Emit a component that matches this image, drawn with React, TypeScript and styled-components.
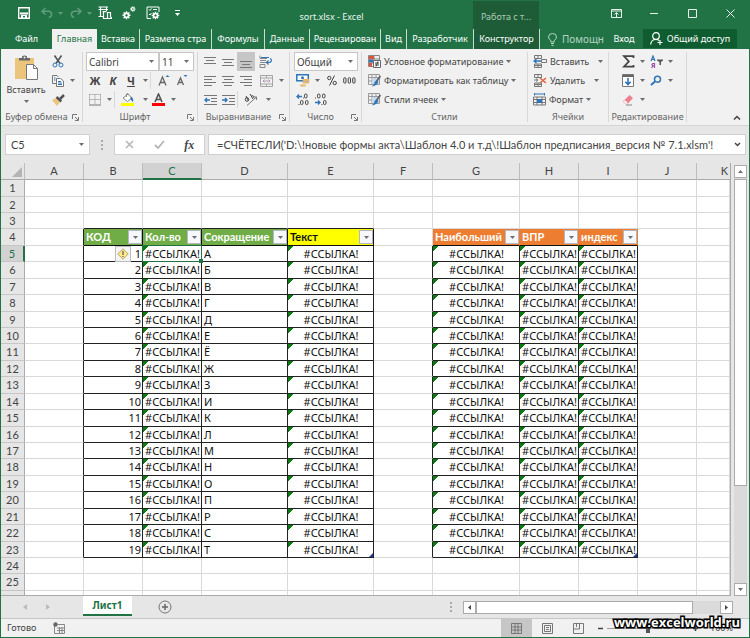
import React from "react";
import styled, { createGlobalStyle, css } from "styled-components";

const ui = `"Noto Sans", "Open Sans", sans-serif`;
const sheetFont = `Lato, "Noto Sans", sans-serif`;
const green = "#217346";
const ink = "#444444";
const blue = "#2e75b6";

const Global = createGlobalStyle`
  * { box-sizing: border-box; }
  body { margin: 0; background: #fff; }
  button, select, input { font: inherit; color: inherit; margin: 0; padding: 0; border: 0; background: none; }
  svg { display: block; flex: none; }
`;

const Window = styled.div`
  display: flex;
  flex-direction: column;
  height: 100vh;
  overflow: hidden;
  border: 1px solid ${green};
  border-top: 0;
  background: #e6e6e6;
  font: 9px/14px ${ui};
  color: ${ink};
`;

/* ---------- Title bar ---------- */
const TitleBar = styled.header`
  display: grid;
  grid-template-columns: 189px 1fr 66px 210px;
  height: 29px;
  flex: none;
  background: ${green};
  color: #e9f3ed;
`;
const QuickAccess = styled.div`
  display: flex;
  align-items: center;
  padding: 0 0 3px 11px;
`;
const QuickButton = styled.button<{ $w: number; $dim?: boolean }>`
  display: flex;
  align-items: center;
  justify-content: center;
  gap: 5px;
  width: ${(p) => p.$w}px;
  height: 24px;
  color: ${(p) => (p.$dim ? "#5f9c7c" : "#fff")};
`;
const DocTitle = styled.h1`
  margin: 0;
  padding-top: 4px;
  font: 9px/25px ${ui};
  text-align: center;
`;
const ContextTitle = styled.div`
  background: #1e5c38;
  color: #a9c9b6;
  line-height: 25px;
  padding-top: 3px;
  margin-top: 1px;
  text-align: center;
  white-space: nowrap;
`;
const WindowControls = styled.div`
  display: flex;
  justify-content: flex-end;
`;
const WindowButton = styled.button`
  display: flex;
  align-items: center;
  justify-content: center;
  width: 38px;
  height: 27px;
`;

/* ---------- Tabs ---------- */
const TabBar = styled.nav`
  display: flex;
  flex: none;
  height: 20px;
  background: ${green};
  color: #fff;
`;
const Tab = styled.button<{ $w: number; $active?: boolean; $context?: boolean; $sep?: boolean }>`
  width: ${(p) => p.$w}px;
  height: 20px;
  overflow: hidden;
  white-space: nowrap;
  text-align: center;
  flex: none;
  ${(p) => p.$sep && css`border-right: 1px solid #c5dccf;`}
  ${(p) => p.$active && css`background: #f1f1f1; color: ${green};`}
  ${(p) => p.$context && css`background: #1e5c38;`}
`;
const TellMe = styled.label`
  display: flex;
  align-items: center;
  gap: 5px;
  width: 69px;
  padding-left: 8px;
  color: #b4d3c1;
  input { width: 44px; min-width: 0; height: 18px; font-size: 10px; }
  input::placeholder { color: #b4d3c1; opacity: 1; }
`;
const Share = styled.button`
  display: flex;
  align-items: center;
  justify-content: center;
  gap: 4px;
  width: 94px;
  height: 19px;
  margin: 0 12px 0 auto;
  background: #0e5c2f;
  white-space: nowrap;
`;

/* ---------- Ribbon ---------- */
const Ribbon = styled.div`
  display: flex;
  flex: none;
  height: 77px;
  padding-top: 3px;
  background: #f1f1f1;
  border-bottom: 1px solid #d5d5d5;
`;
const Group = styled.section<{ $w: number }>`
  display: grid;
  grid-template-rows: 57px 16px;
  flex: none;
  width: ${(p) => p.$w}px;
  height: 70px;
  border-right: 1px solid #d8d8d8;
`;
const GroupBody = styled.div`
  display: flex;
`;
const GroupFooter = styled.div`
  display: flex;
  align-items: center;
  color: #666;
  white-space: nowrap;
  span { flex: 1; text-align: center; }
  button { padding-right: 3px; }
`;
const Rows = styled.div<{ $pad?: number }>`
  display: grid;
  grid-template-rows: repeat(3, 19px);
  padding-left: ${(p) => p.$pad ?? 0}px;
`;
const Row = styled.div`
  display: flex;
  align-items: center;
`;
const Tool = styled.button<{ $w?: number; $on?: boolean }>`
  display: flex;
  align-items: center;
  justify-content: center;
  width: ${(p) => p.$w ?? 18}px;
  height: 19px;
  flex: none;
  ${(p) => p.$on && css`background: #c6c6c6;`}
`;
const Glyph = styled.span<{ $italic?: boolean; $underline?: boolean }>`
  font-weight: 700;
  font-size: 11px;
  font-style: ${(p) => (p.$italic ? "italic" : "normal")};
  text-decoration: ${(p) => (p.$underline ? "underline" : "none")};
`;
const Rule = styled.i`
  width: 1px;
  height: 17px;
  background: #d8d8d8;
  flex: none;
`;
const Paste = styled.button`
  display: flex;
  flex-direction: column;
  align-items: center;
  width: 50px;
  padding-top: 3px;
`;
const PasteLabel = styled.span`
  line-height: 17px;
  padding: 1px 0 2px;
`;
const TextTool = styled.button<{ $gap?: number }>`
  display: flex;
  align-items: center;
  height: 19px;
  gap: 3px;
  white-space: nowrap;
  svg:last-child { margin-left: ${(p) => p.$gap ?? 0}px; }
`;
const PickWrap = styled.label<{ $w: number }>`
  position: relative;
  width: ${(p) => p.$w}px;
  height: 19px;
  background: #fff;
  border: 1px solid #c6c6c6;
  select {
    appearance: none;
    display: block;
    width: 100%;
    height: 17px;
    padding-left: 2px;
    font-size: 10px;
  }
  svg { position: absolute; right: 4px; top: 7px; pointer-events: none; }
`;
const Collapse = styled.button`
  display: flex;
  align-items: flex-end;
  margin-left: auto;
  padding: 0 8px 5px 0;
`;

/* ---------- Formula bar ---------- */
const FormulaBar = styled.div`
  display: flex;
  align-items: center;
  flex: none;
  height: 37px;
  padding: 0 3px 0 4px;
  font: 11px/18px ${sheetFont};
`;
const NameBox = styled.label`
  display: flex;
  align-items: center;
  width: 85px;
  height: 21px;
  padding: 0 5px;
  background: #fff;
  border: 1px solid #d0d0d0;
  input { flex: 1; min-width: 0; }
`;
const Dots = styled.span`
  display: flex;
  justify-content: center;
  width: 24px;
`;
const EntryButtons = styled.div`
  display: flex;
  width: 91px;
  height: 21px;
  background: #fff;
  border: 1px solid #d0d0d0;
  button { flex: 1; display: flex; align-items: center; justify-content: center; }
`;
const FxButton = styled.button`
  font: italic 700 12px/18px "Liberation Serif", serif;
`;
const FormulaField = styled.div`
  display: flex;
  align-items: center;
  flex: 1;
  height: 21px;
  margin-left: 3px;
  padding: 0 4px 0 8px;
  background: #fff;
  border: 1px solid #d0d0d0;
  input { flex: 1; min-width: 0; }
`;

/* ---------- Sheet ---------- */
const SheetArea = styled.main`
  display: flex;
  flex: 1;
  min-height: 0;
`;
const GridClip = styled.div`
  flex: 1;
  min-width: 0;
  overflow: hidden;
  border-right: 1px solid #ababab;
  border-bottom: 1px solid #ababab;
`;
const Grid = styled.table`
  width: 100%;
  table-layout: fixed;
  border-collapse: separate;
  border-spacing: 0;
  background: #fff;
  font: 11px/14px ${sheetFont};
  color: #111;
  th, td { padding: 0; white-space: nowrap; overflow: hidden; }
`;
const Col = styled.col<{ $w?: number }>`
  width: ${(p) => (p.$w ? `${p.$w}px` : "auto")};
`;
const ColHead = styled.th<{ $active?: boolean; $last?: boolean }>`
  height: 17px;
  font-weight: 400;
  color: ${(p) => (p.$active ? green : ink)};
  background: ${(p) => (p.$active ? "#d2d2d2" : "#e6e6e6")};
  border-right: 1px solid #bcbcbc;
  border-bottom: ${(p) => (p.$active ? `2px solid ${green}` : "1px solid #ababab")};
  ${(p) => p.$last && css`&& { text-align: right; padding-right: 2px; border-right: 0; }`}
`;
const Corner = styled.th`
  background: #e6e6e6;
  border-right: 1px solid #bcbcbc;
  border-bottom: 1px solid #ababab;
  svg { margin: 2px 2px 0 auto; }
`;
const SheetRow = styled.tr<{ $h: number }>`
  height: ${(p) => p.$h}px;
`;
const RowHead = styled.th<{ $active?: boolean }>`
  font-weight: 400;
  color: ${(p) => (p.$active ? green : ink)};
  background: ${(p) => (p.$active ? "#d2d2d2" : "#e6e6e6")};
  border-bottom: 1px solid #c6c6c6;
  border-right: ${(p) => (p.$active ? `2px solid ${green}` : "1px solid #ababab")};
`;
const Cell = styled.td<{ $right?: string; $bottom?: string; $align?: string; $flag?: boolean }>`
  font-family: ${ui};
  text-align: ${(p) => p.$align ?? "left"};
  border-right: 1px solid ${(p) => p.$right ?? "#d9d9d9"};
  border-bottom: 1px solid ${(p) => p.$bottom ?? "#d9d9d9"};
  ${(p) => p.$flag && css`background: linear-gradient(135deg, #087c10 4px, transparent 4px);`}
  && { overflow: visible; padding: 0 1px 0 2px; position: relative; }
`;
const TableHead = styled.th<{ $bg: string; $fg: string; $right: string }>`
  background: ${(p) => p.$bg};
  color: ${(p) => p.$fg};
  border-right: 1px solid ${(p) => p.$right};
  border-bottom: 1px solid #111;
  font-weight: 700;
`;
const HeadInner = styled.div`
  display: flex;
  align-items: center;
  justify-content: space-between;
  padding-left: 2px;
  height: 15px;
`;
const FilterButton = styled.button`
  display: flex;
  align-items: center;
  justify-content: center;
  width: 14px;
  height: 14px;
  flex: none;
  background: #f7f8fb;
  border: 1px solid #b4b8c4;
`;
const Selection = styled.i`
  position: absolute;
  inset: -1px;
  border: 1px solid ${green};
  outline: 1px solid ${green};
  outline-offset: -1px;
  z-index: 1;
  &::after {
    content: "";
    position: absolute;
    right: -2px;
    bottom: -2px;
    width: 4px;
    height: 4px;
    background: ${green};
  }
`;
const Warning = styled.button`
  position: absolute;
  right: 11px;
  top: 0;
  width: 16px;
  height: 16px;
  display: flex;
  align-items: center;
  justify-content: center;
  background: #f4f4f4;
  border: 1px solid #bdbdbd;
`;
const Resize = styled.i`
  position: absolute;
  right: 0;
  bottom: 0;
  border: 2px solid #1f3b94;
  border-left-color: transparent;
  border-top-color: transparent;
`;
const VScroll = styled.div`
  display: flex;
  flex-direction: column;
  width: 13px;
  margin: 2px 2px 0 3px;
  flex: none;
  background: #dadada;
`;
const ScrollButton = styled.button`
  display: flex;
  align-items: center;
  justify-content: center;
  width: 13px;
  height: 13px;
  flex: none;
  background: #fff;
  border: 1px solid #ababab;
`;
const VTrack = styled.div`
  flex: 1;
  padding-top: 1px;
`;
const VThumb = styled.div`
  height: 76%;
  background: #fff;
  border: 1px solid #ababab;
`;

/* ---------- Sheet tabs ---------- */
const SheetTabs = styled.div`
  display: flex;
  flex: none;
  height: 23px;
  border-bottom: 1px solid #c6c6c6;
`;
const TabArrows = styled.div`
  display: flex;
  width: 82px;
  padding-left: 12px;
  button { width: 23px; display: flex; align-items: center; justify-content: center; }
`;
const SheetTab = styled.button`
  width: 49px;
  height: 20px;
  background: #fff;
  border-bottom: 2px solid ${green};
  color: ${green};
  font-size: 10px;
  font-weight: 700;
`;
const AddSheet = styled.button`
  display: flex;
  justify-content: center;
  align-items: center;
  width: 66px;
`;
const HScroll = styled.div`
  display: flex;
  align-items: center;
  width: 294px;
  margin: 0 16px 0 auto;
`;
const HTrack = styled.div`
  display: flex;
  flex: 1;
  height: 13px;
  background: #dadada;
`;
const HThumb = styled.div`
  width: 89%;
  background: #fff;
  border: 1px solid #ababab;
`;

/* ---------- Status bar ---------- */
const StatusBar = styled.footer`
  position: relative;
  display: flex;
  align-items: center;
  flex: none;
  height: 18px;
  background: #f1f1f1;
`;
const Mode = styled.span`
  padding: 0 17px 0 6px;
`;
const Views = styled.div`
  display: flex;
  margin-left: auto;
`;
const ViewButton = styled.button<{ $on?: boolean }>`
  display: flex;
  align-items: center;
  justify-content: center;
  width: 31px;
  height: 18px;
  background: ${(p) => (p.$on ? "#c6c6c6" : "transparent")};
`;
const Zoom = styled.div`
  display: flex;
  align-items: center;
  width: 155px;
  gap: 4px;
  padding-left: 4px;
  input {
    appearance: none;
    width: 82px;
    height: 12px;
    background: linear-gradient(#a0a0a0, #a0a0a0) center / 100% 1px no-repeat;
  }
  input::-webkit-slider-thumb { appearance: none; width: 4px; height: 10px; background: #555; }
  span { padding-left: 8px; }
`;
const Watermark = styled.a`
  position: absolute;
  right: 9px;
  top: -7px;
  font: 700 13px/20px "Open Sans", sans-serif;
  color: #fff;
  text-decoration: none;
  -webkit-text-stroke: 3px #000;
  paint-order: stroke fill;
`;

/* ---------- Icons ---------- */
const Svg = ({ w = 14, h = 14, children }: { w?: number; h?: number; children: React.ReactNode }) => (
  <svg width={w} height={h} viewBox={`0 0 ${w} ${h}`} fill="none" stroke="currentColor" aria-hidden="true">
    {children}
  </svg>
);
const Caret = ({ color = "#6e6e6e" }: { color?: string }) => (
  <Svg w={5} h={3}><path d="M0 0h5L2.5 3z" fill={color} stroke="none" /></Svg>
);
const DropTool = ({ w = 10, label }: { w?: number; label: string }) => (
  <Tool $w={w} aria-label={label}><Caret /></Tool>
);
const Launcher = ({ label }: { label: string }) => (
  <button aria-label={label}>
    <Svg w={7} h={7}><path d="M.5 5V.5H5M3 3l3 3M6.500 3v3.500H3" stroke="#777" /></Svg>
  </button>
);
const GearShape = ({ x, y, s = 1 }: { x: number; y: number; s?: number }) => (
  <g transform={`translate(${x} ${y}) scale(${s})`}>
    <circle r="2.200" strokeWidth="1.800" />
    <path d="M0-4.200v1.500M0 2.700v1.500M-4.200 0h1.500M2.700 0h1.500M-3-3l1.100 1.100M1.900 1.900L3 3M-3 3l1.100-1.100M1.900-1.900L3-3" strokeWidth="1.500" />
  </g>
);
const SaveIcon = () => (
  <Svg w={12} h={12}><path d="M.7.7h10.600v10.600H.7z" strokeWidth="1.400" /><path d="M2 5.500h8v2H2zM3 8h6v3.500H7V9H5v2.500H3z" fill="currentColor" stroke="none" /></Svg>
);
const UndoIcon = ({ flip }: { flip?: boolean }) => (
  <Svg w={12} h={12}>
    <g transform={flip ? "translate(12 0) scale(-1 1)" : undefined}>
      <path d="M4.500 1L1 4.300l3.500 3.200M1.200 4.300h6c4.500 0 4.500 5.500.5 6.200" strokeWidth="1.500" />
    </g>
  </Svg>
);
const TableToolIcon = () => (
  <Svg><path d="M.5 1h9.500M.5 3.500h9.500M2.500 1v9M8.500 1v4M.5 10.500h5" strokeWidth="1.200" /><path d="M4.500 5.700h4M10 6.500h2.500v5M5.500 6v6.500h4V6M9.500 12.500h4v-1.500" strokeWidth="1.200" /></Svg>
);
const GearsIcon = () => (
  <Svg><GearShape x={4.500} y={9.300} s={0.95} /><GearShape x={10.800} y={3} s={0.65} /></Svg>
);
const FormGearIcon = () => (
  <Svg><path d="M13 6V1H1v11.500h4M3 3.500l1 1 1.500-2M3 8l1 1 1.500-2M7 3.500h4" /><GearShape x={9.500} y={9.500} s={0.9} /></Svg>
);
const PasteIcon = () => (
  <Svg w={24} h={25}>
    <path d="M1 3h19v21H1z" fill="#ecc57c" stroke="none" />
    <path d="M5 5.500V3h3V1.500Q10.500-.5 13 1.500V3h3v2.500z" fill="#666" stroke="none" />
    <circle cx="10.500" cy="2.500" r="1" fill="#f1f1f1" stroke="none" />
    <path d="M12.500 9.500h7l4 4v11h-11z" fill="#fff" stroke="#777" />
    <path d="M19.500 9.500v4h4" stroke="#777" />
  </Svg>
);
const CutIcon = () => (
  <Svg w={12} h={13}><path d="M2.500.5L8 8.500M9.500.5L4 8.500" stroke="#555" strokeWidth="1.600" /><circle cx="3" cy="10" r="2" stroke={blue} /><circle cx="9" cy="10" r="2" stroke={blue} /></Svg>
);
const CopyIcon = () => (
  <Svg w={12} h={12}><path d="M4 8.500H.5v-8H5L6.500 2" stroke="#777" /><path d="M4.500 3.500h4l3 2.500v5.500h-7z" fill="#fff" stroke="#777" /><path d="M6 6.500h3M6 8h4M6 9.500h4M2 3h1.500M2 5h1.500" stroke={blue} /></Svg>
);
const BrushIcon = () => (
  <Svg w={13} h={12}><path d="M0 6l4-2 4 4-3 4z" fill="#ecc57c" stroke="none" /><path d="M4.500 3l4.800 4.500M8 5l4-4" stroke="#555" strokeWidth="2.500" /></Svg>
);
const BorderIcon = () => (
  <Svg w={12} h={12}><path d="M.5.5h11M.5 5.500h11M.5.5v9M6 .5v9M11.500.5v9" stroke="#888" strokeDasharray="1 1" /><path d="M0 11h12" stroke="#777" /></Svg>
);
const BucketIcon = () => (
  <Svg w={14} h={13}><path d="M2 5l5-4 3.500 4-4 3.500z" fill="#fff" stroke="#888" /><path d="M5.500 4V1Q7-.5 8 2" stroke="#888" /><path d="M10 3.500q3 2 2 5.500l-2.500-2.500z" fill={blue} stroke="none" /><path d="M0 10h13v3H0z" fill="#ffff00" stroke="none" /></Svg>
);
const FontColorIcon = () => (
  <Svg w={14} h={13}><path d="M3 9L6.500 1 10 9M4.300 6.500h4.500" stroke="#555" strokeWidth="1.600" /><path d="M0 10h13v3H0z" fill="#ff0000" stroke="none" /></Svg>
);
const SizeIcon = ({ down }: { down?: boolean }) => (
  <Svg w={12} h={13}><path d={down ? "M1.500 11L4.500 4l3 7M2.500 8.500h4" : "M1 11.500L4.500 3 8 11.500M2.200 8.500h4.600"} stroke="#666" strokeWidth="1.300" /><path d={down ? "M7.500 1h4L9.500 3z" : "M7.500 3h4L9.500 1z"} fill={blue} stroke="none" /></Svg>
);
const LinesIcon = ({ d }: { d: string }) => <Svg w={12} h={12}><path d={d} stroke="#777" /></Svg>;
const WrapIcon = () => (
  <Svg><path d="M1 .5v3h7M1 5.500h6M1 7.500h6M1 9.500h5v3H1z" stroke="#888" /><path d="M2 2.500h8M8 7.500h3q3-2.500 0-4M9.500 5.500l-2 2 2 2" stroke={blue} strokeWidth="1.200" /></Svg>
);
const MergeIcon = () => (
  <Svg w={13} h={12}><path d="M.5.5h12v11H.5zM.5 3h12M.5 9h12M6.500.5V3M6.500 9v2.500" stroke="#a5a5a5" /><path d="M3 6h7M4.500 4.500L3 6l1.500 1.500M8.500 4.500L10 6 8.500 7.500" stroke="#b29bb4" /></Svg>
);
const IndentIcon = ({ right }: { right?: boolean }) => (
  <Svg w={13} h={12}><path d="M0 1.500h13M7 4.500h6M7 7.500h6M0 10.500h13" stroke="#777" /><path d={right ? "M0 6h5M3 4l2 2-2 2" : "M1 6h5M3 4L1 6l2 2"} stroke={blue} strokeWidth="1.400" /></Svg>
);
const OrientIcon = () => (
  <Svg w={14} h={13}><path d="M3 12.500L12.500 4M12.500 7V4H9.500" stroke="#777" /><circle cx="3" cy="6.500" r="1.800" /><path d="M4.500 8L2 3M6 1l3 5M7 3.500q3-2 2.500 1" /></Svg>
);
const MoneyIcon = () => (
  <Svg w={14} h={13}><path d="M.8.8h11.500v6H.8z" stroke={blue} strokeWidth="1.500" fill="#fff" /><circle cx="6.500" cy="3.800" r="1.500" fill={blue} stroke="none" /><path d="M7.500 6h5M7.500 8.500h5M5 11.500h4" stroke="#e8b665" strokeWidth="1.800" strokeLinecap="round" /></Svg>
);
const DecimalIcon = ({ less }: { less?: boolean }) => (
  <Svg w={14} h={13}>
    <path d={less ? "M1 9.500h5M4 7.500l2 2-2 2" : "M1 3.500h5M3 1.500l-2 2 2 2"} stroke={blue} strokeWidth="1.300" />
    {less ? (
      <><rect x="3.500" y="1" width="2.500" height="4" rx="1.200" /><rect x="8.500" y="1" width="2.500" height="4" rx="1.200" /><rect x="9.500" y="7.500" width="2.500" height="4" rx="1.200" /><path d="M1 5h1M7.500 11.500h1" /></>
    ) : (
      <><rect x="8.500" y="1" width="2.500" height="4" rx="1.200" /><rect x="4.500" y="7.500" width="2.500" height="4" rx="1.200" /><rect x="9.500" y="7.500" width="2.500" height="4" rx="1.200" /><path d="M2.500 11.500h1M7 5h.8" /></>
    )}
  </Svg>
);
const ConditionalIcon = () => (
  <Svg w={13} h={13}><path d="M.5.5h11v11H.5zM.5 4h11M.5 8h6M6 .5v11" stroke="#888" /><path d="M1 1h5v3H1zM1 8h3v3.500H1z" fill="#e0533a" stroke="none" /><path d="M1 4.500h4v3H1z" fill={blue} stroke="none" /><path d="M5.500 5.500h7v7h-7z" fill="#fff" stroke="#666" /><path d="M7 8h4M7 10h4M10 6.500L8 11.500" /></Svg>
);
const StyleIcon = () => (
  <Svg w={13} h={13}><path d="M.5.500h11v10H.5zM.5 3.500h11M.5 7h11M4 .5v10M8 .5v10" stroke="#999" /><path d="M4 4h7v6H4z" fill="#c7dbef" stroke="none" /><path d="M12.500 2L8 8" stroke="#666" strokeWidth="1.800" /><path d="M8.500 6.500l1.800 1.600Q9 12 3.500 12.500 7 10 6.500 8z" fill={blue} stroke="none" /></Svg>
);
const CellsIcon = ({ kind }: { kind: "insert" | "delete" }) => (
  <Svg w={14} h={13}>
    <path d="M1.500.5h7v3h-7zM1.500 9h7v3.500h-7zM5 .5v3M5 9v3.500M1.500 10.500h7" stroke="#777" />
    {kind === "insert" ? (
      <><path d="M8.500 4.500h5v3h-5z" stroke="#777" /><path d="M1 6h7M3.500 4L1 6l2.500 2" stroke={blue} strokeWidth="1.400" /></>
    ) : (
      <><path d="M1 6h4M3 4.500L5 6 3 7.500" stroke="#777" /><path d="M7 4l6 5M13 4l-6 5" stroke="#e0633f" strokeWidth="1.500" /></>
    )}
  </Svg>
);
const FormatIcon = () => (
  <Svg w={13} h={13}><path d="M1.500 1h10M1.500 0v2.500M11.500 0v2.500" stroke={blue} /><path d="M.5 4h12v8H.5zM.5 6.500h12M.5 9.500h12M4 4v8M9 4v8" stroke="#777" /><path d="M4 6h5v4H4z" fill={blue} stroke="none" /></Svg>
);
const SumIcon = () => (
  <Svg w={13} h={13}><path d="M11.500 3V1.200H2L6.800 6.500 2 11.700h9.500V10" strokeWidth="1.800" /></Svg>
);
const SortIcon = () => (
  <Svg w={13} h={14}><path d="M1 6l2-5 2 5M1.700 4.500h2.600" stroke={blue} strokeWidth="1.200" /><path d="M4.500 13V8.500H3q-2 1.200 0 2.400h1.500M3 11l-1.500 2" stroke="#9b4fa5" strokeWidth="1.200" /><path d="M7 4.500h6v1L11 7v3H9.500V7L7 5.500z" fill="#555" stroke="none" /></Svg>
);
const FillIcon = () => (
  <Svg w={12} h={13}><path d="M.5.5h11v12H.5z" stroke="#777" fill="#fff" /><path d="M.5 2h11" stroke="#666" strokeWidth="2" /><path d="M6 4v6.500M3.300 7.800L6 10.500l2.700-2.700" stroke={blue} strokeWidth="1.600" /></Svg>
);
const FindIcon = () => (
  <Svg w={12} h={12}><circle cx="7.500" cy="4.200" r="3" stroke={blue} strokeWidth="1.500" /><path d="M5 6.500L1 10" stroke={blue} strokeWidth="2" /></Svg>
);
const EraseIcon = () => (
  <Svg w={12} h={12}><path d="M1 7.500L7.500 1l3.500 3L5 10.500z" fill="#ec8091" stroke="none" /><path d="M1 7.500L3 6l3 3.300L5 10.500z" fill="#fff" stroke="#e99" strokeWidth=".5" /><path d="M4 11h6" stroke="#888" /></Svg>
);

/* ---------- Data ---------- */
const columns = [
  { id: "A", w: 59 }, { id: "B", w: 59 }, { id: "C", w: 59 }, { id: "D", w: 86 }, { id: "E", w: 86 },
  { id: "F", w: 59 }, { id: "G", w: 87 }, { id: "H", w: 59 }, { id: "I", w: 59 }, { id: "J", w: 59 }, { id: "K" },
];
const letters = ["А", "Б", "В", "Г", "Д", "Е", "Ё", "Ж", "З", "И", "К", "Л", "М", "Н", "О", "П", "Р", "С", "Т"];
const heads: Record<string, { text: string; bg: string; fg: string; right: string }> = {
  B: { text: "КОД", bg: "#70ad47", fg: "#fff", right: "#111" },
  C: { text: "Кол-во", bg: "#70ad47", fg: "#fff", right: "#111" },
  D: { text: "Сокращение", bg: "#70ad47", fg: "#fff", right: "#111" },
  E: { text: "Текст", bg: "#ffff00", fg: "#111", right: "#111" },
  G: { text: "Наибольший", bg: "#ed7d31", fg: "#fff", right: "#ed7d31" },
  H: { text: "ВПР", bg: "#ed7d31", fg: "#fff", right: "#ed7d31" },
  I: { text: "индекс", bg: "#ed7d31", fg: "#fff", right: "#ed7d31" },
};
const FIRST = 5;
const LAST = 23;
const ERROR = "#ССЫЛКА!";
const rowHeight = (n: number) => ([1, 4, 6].includes(n % 7) ? 17 : 16);

function SheetCell({ col, row }: { col: string; row: number }) {
  const head = heads[col];
  if (row === 4 && head) {
    return (
      <TableHead scope="col" $bg={head.bg} $fg={head.fg} $right={head.right}>
        <HeadInner>
          {head.text}
          <FilterButton aria-label={`Фильтр: ${head.text}`}><Caret /></FilterButton>
        </HeadInner>
      </TableHead>
    );
  }
  const inside = row >= FIRST && row <= LAST;
  if (head && inside) {
    const align = col === "B" ? "right" : col === "D" ? "left" : "center";
    return (
      <Cell $right="#222" $bottom="#222" $align={align} $flag={col !== "B" && col !== "D"}>
        {col === "B" ? row - 4 : col === "D" ? letters[row - FIRST] : ERROR}
        {col === "B" && row === FIRST && (
          <Warning aria-label="Ошибка">
            <Svg w={12} h={12}><path d="M6 .8L11.200 6 6 11.200.8 6z" fill="#ffe98a" stroke="#b7a46a" /><path d="M6 3v4M6 8v1" stroke="#555" strokeWidth="1.200" /></Svg>
          </Warning>
        )}
        {col === "C" && row === FIRST && <Selection />}
        {row === LAST && (col === "E" || col === "I") && <Resize />}
      </Cell>
    );
  }
  const besideTable = (inside || row === 4) && (col === "A" || (col === "F" && row !== 4));
  const aboveTable = row === 3 && "BCDE".includes(col);
  return <Cell $right={besideTable ? "#222" : undefined} $bottom={aboveTable ? "#222" : undefined} />;
}

const tabs = [
  { t: "Файл", w: 51 }, { t: "Главная", w: 45, active: true }, { t: "Вставка", w: 43, sep: true },
  { t: "Разметка стра", w: 72, sep: true }, { t: "Формулы", w: 53, sep: true }, { t: "Данные", w: 45, sep: true },
  { t: "Рецензирован", w: 71, sep: true }, { t: "Вид", w: 26, sep: true }, { t: "Разработчик", w: 67, sep: true },
  { t: "Конструктор", w: 66, sep: true, context: true },
];

const alignRows = [
  ["M0 1.500h12M2 4.500h8M0 7.500h12", "M0 3.500h12M2 6.500h8M0 9.500h12", "M0 5.500h12M2 8.500h8M0 11.500h12"],
  ["M0 1.500h12M0 4.500h8M0 7.500h12M0 10.500h8", "M0 1.500h12M2 4.500h8M0 7.500h12M2 10.500h8", "M0 1.500h12M4 4.500h8M0 7.500h12M4 10.500h8"],
];
const alignNames = [["По верхнему краю", "По середине", "По нижнему краю"], ["По левому краю", "По центру", "По правому краю"]];

function RibbonGroup({ w, name, launcher, children }: { w: number; name: string; launcher?: boolean; children: React.ReactNode }) {
  return (
    <Group $w={w} aria-label={name}>
      <GroupBody>{children}</GroupBody>
      <GroupFooter><span>{name}</span>{launcher && <Launcher label={`Параметры: ${name}`} />}</GroupFooter>
    </Group>
  );
}

function Pick({ w, label, value }: { w: number; label: string; value: string }) {
  return (
    <PickWrap $w={w}>
      <select aria-label={label} defaultValue={value}><option>{value}</option></select>
      <Caret />
    </PickWrap>
  );
}

export default function App() {
  return (
    <Window>
      <Global />
      <TitleBar>
        <QuickAccess>
          <QuickButton $w={24} aria-label="Сохранить"><SaveIcon /></QuickButton>
          <QuickButton $w={32} $dim aria-label="Отменить"><UndoIcon /><Caret color="currentColor" /></QuickButton>
          <QuickButton $w={25} $dim aria-label="Вернуть"><UndoIcon flip /><Caret color="currentColor" /></QuickButton>
          <QuickButton $w={24} aria-label="Таблица"><TableToolIcon /></QuickButton>
          <QuickButton $w={24} aria-label="Макросы"><GearsIcon /></QuickButton>
          <QuickButton $w={24} aria-label="Параметры формы"><FormGearIcon /></QuickButton>
          <QuickButton $w={24} aria-label="Настройка панели"><Svg w={5} h={6}><path d="M0 .5h5" /><path d="M0 3h5L2.500 6z" fill="currentColor" stroke="none" /></Svg></QuickButton>
        </QuickAccess>
        <DocTitle>sort.xlsx - Excel</DocTitle>
        <ContextTitle>Работа с т...</ContextTitle>
        <WindowControls>
          <WindowButton aria-label="Параметры ленты"><Svg w={11} h={9}><path d="M.5.5h10v8H.5zM.5 2h10M5.500 8V4M3.500 5.500l2-2 2 2" /></Svg></WindowButton>
          <WindowButton aria-label="Свернуть"><Svg w={8} h={9}><path d="M0 4.500h8" /></Svg></WindowButton>
          <WindowButton aria-label="Развернуть"><Svg w={9} h={9}><path d="M.5.5h8v8h-8z" /></Svg></WindowButton>
          <WindowButton aria-label="Закрыть"><Svg w={9} h={9}><path d="M.5.5l8 8M8.500.5l-8 8" /></Svg></WindowButton>
        </WindowControls>
      </TitleBar>

      <TabBar>
        {tabs.map((t) => (
          <Tab key={t.t} $w={t.w} $active={t.active} $sep={t.sep} $context={t.context}>{t.t}</Tab>
        ))}
        <TellMe>
          <Svg w={9} h={13}><path d="M2.800 9V7.500Q.5 6 .5 4a4 3.500 0 0 1 8 0q0 2-2.300 3.500V9zM3 10.500h3M3.500 12.500h2" /></Svg>
          <input aria-label="Помощник" placeholder="Помощн" />
        </TellMe>
        <Tab $w={30}>Вход</Tab>
        <Share>
          <Svg w={13} h={13}><circle cx="6" cy="4" r="3.300" strokeWidth="1.200" /><path d="M.7 12.500Q1 7.500 6 7.500q2 0 3 1M10 8v5M7.500 10.500h5" strokeWidth="1.200" /></Svg>
          Общий доступ
        </Share>
      </TabBar>

      <Ribbon>
        <RibbonGroup w={82} name="Буфер обмена" launcher>
          <Paste><PasteIcon /><PasteLabel>Вставить</PasteLabel><Caret /></Paste>
          <Rows>
            <Row><Tool $w={14} aria-label="Вырезать"><CutIcon /></Tool></Row>
            <Row><Tool $w={14} aria-label="Копировать"><CopyIcon /></Tool><DropTool w={14} label="Варианты копирования" /></Row>
            <Row><Tool $w={14} aria-label="Формат по образцу"><BrushIcon /></Tool></Row>
          </Rows>
        </RibbonGroup>

        <RibbonGroup w={115} name="Шрифт" launcher>
          <Rows $pad={3}>
            <Row><Pick w={73} label="Шрифт" value="Calibri" /><Pick w={35} label="Размер" value="11" /></Row>
            <Row>
              <Tool aria-label="Полужирный"><Glyph>Ж</Glyph></Tool>
              <Tool aria-label="Курсив"><Glyph $italic>К</Glyph></Tool>
              <Tool aria-label="Подчёркнутый"><Glyph $underline>Ч</Glyph></Tool>
              <DropTool label="Вид подчёркивания" /><Rule />
              <Tool $w={26} aria-label="Увеличить шрифт"><SizeIcon /></Tool>
              <Tool $w={10} aria-label="Уменьшить шрифт"><SizeIcon down /></Tool>
            </Row>
            <Row>
              <Tool aria-label="Границы"><BorderIcon /></Tool><DropTool label="Вид границ" /><Rule />
              <Tool $w={26} aria-label="Заливка"><BucketIcon /></Tool><DropTool w={8} label="Цвет заливки" />
              <Tool $w={20} aria-label="Цвет текста"><FontColorIcon /></Tool><DropTool w={8} label="Выбор цвета текста" />
            </Row>
          </Rows>
        </RibbonGroup>

        <RibbonGroup w={92} name="Выравнивание" launcher>
          <Rows $pad={3}>
            <Row>
              {alignRows[0].map((d, i) => <Tool key={d} $on={i === 2} aria-label={alignNames[0][i]}><LinesIcon d={d} /></Tool>)}
              <Tool $w={22} aria-label="Перенос текста"><WrapIcon /></Tool>
            </Row>
            <Row>
              {alignRows[1].map((d, i) => <Tool key={d} aria-label={alignNames[1][i]}><LinesIcon d={d} /></Tool>)}
              <Tool $w={22} aria-label="Объединить"><MergeIcon /></Tool><DropTool w={8} label="Варианты объединения" />
            </Row>
            <Row>
              <Tool aria-label="Уменьшить отступ"><IndentIcon /></Tool><Tool aria-label="Увеличить отступ"><IndentIcon right /></Tool>
              <Rule /><Tool $w={26} aria-label="Ориентация"><OrientIcon /></Tool><DropTool w={8} label="Варианты ориентации" />
            </Row>
          </Rows>
        </RibbonGroup>

        <RibbonGroup w={72} name="Число" launcher>
          <Rows $pad={4}>
            <Row><Pick w={64} label="Числовой формат" value="Общий" /></Row>
            <Row>
              <Tool aria-label="Денежный формат"><MoneyIcon /></Tool><DropTool label="Валюта" />
              <Tool $w={20} aria-label="Процентный формат"><Svg w={10} h={11}><circle cx="2.300" cy="3" r="1.700" /><circle cx="7.700" cy="8" r="1.700" /><path d="M7.500.5l-5 10" /></Svg></Tool>
              <Tool $w={14} aria-label="Разделитель разрядов"><Svg w={13} h={7}><rect x=".7" y=".7" width="2.300" height="5.500" rx="1.100" /><rect x="5.200" y=".7" width="2.300" height="5.500" rx="1.100" /><rect x="9.700" y=".7" width="2.300" height="5.500" rx="1.100" /></Svg></Tool>
            </Row>
            <Row>
              <Tool aria-label="Увеличить разрядность"><DecimalIcon /></Tool><Tool aria-label="Уменьшить разрядность"><DecimalIcon less /></Tool>
            </Row>
          </Rows>
        </RibbonGroup>

        <RibbonGroup w={166} name="Стили">
          <Rows $pad={6}>
            <TextTool><ConditionalIcon />Условное форматирование<Caret /></TextTool>
            <TextTool><StyleIcon />Форматировать как таблицу<Caret /></TextTool>
            <TextTool><StyleIcon />Стили ячеек<Caret /></TextTool>
          </Rows>
        </RibbonGroup>

        <RibbonGroup w={81} name="Ячейки">
          <Rows $pad={5}>
            <TextTool $gap={6}><CellsIcon kind="insert" />Вставить<Caret /></TextTool>
            <TextTool $gap={6}><CellsIcon kind="delete" />Удалить<Caret /></TextTool>
            <TextTool><FormatIcon />Формат<Caret /></TextTool>
          </Rows>
        </RibbonGroup>

        <RibbonGroup w={78} name="Редактирование">
          <Rows $pad={10}>
            <Row><Tool aria-label="Сумма"><SumIcon /></Tool><DropTool label="Функции" /><Tool aria-label="Сортировка и фильтр"><SortIcon /></Tool><DropTool label="Варианты сортировки" /></Row>
            <Row><Tool aria-label="Заполнить"><FillIcon /></Tool><DropTool label="Направление" /><Tool aria-label="Найти"><FindIcon /></Tool><DropTool label="Варианты поиска" /></Row>
            <Row><Tool aria-label="Очистить"><EraseIcon /></Tool><DropTool label="Варианты очистки" /></Row>
          </Rows>
        </RibbonGroup>
        <Collapse aria-label="Свернуть ленту"><Svg w={8} h={5}><path d="M1 4.500l3-3 3 3" strokeWidth="1.500" /></Svg></Collapse>
      </Ribbon>

      <FormulaBar>
        <NameBox><input aria-label="Имя ячейки" defaultValue="C5" /><Caret /></NameBox>
        <Dots><Svg w={2} h={10}><path d="M1 0v10" stroke="#aaa" strokeWidth="2" strokeDasharray="2 2" /></Svg></Dots>
        <EntryButtons>
          <button aria-label="Отмена"><Svg w={9} h={9}><path d="M1 1l7 7M8 1L1 8" stroke="#b5b5b5" strokeWidth="1.500" /></Svg></button>
          <button aria-label="Ввод"><Svg w={11} h={9}><path d="M1 5l3 3 6-7" stroke="#b5b5b5" strokeWidth="1.800" /></Svg></button>
          <FxButton aria-label="Вставить функцию">fx</FxButton>
        </EntryButtons>
        <FormulaField>
          <input aria-label="Строка формул" defaultValue="=СЧЁТЕСЛИ('D:\!новые формы акта\Шаблон 4.0 и т.д\!Шаблон предписания_версия № 7.1.xlsm'!" />
          <Svg w={7} h={5}><path d="M1 1l2.500 2.500L6 1" strokeWidth="1.500" /></Svg>
        </FormulaField>
      </FormulaBar>

      <SheetArea>
        <GridClip>
          <Grid>
            <colgroup>
              <Col $w={24} />
              {columns.map((c) => <Col key={c.id} $w={c.w} />)}
            </colgroup>
            <thead>
              <tr>
                <Corner aria-label="Выделить всё"><Svg w={10} h={10}><path d="M10 0v10H0z" fill="#b4b4b4" stroke="none" /></Svg></Corner>
                {columns.map((c) => <ColHead key={c.id} scope="col" $active={c.id === "C"} $last={c.id === "K"}>{c.id}</ColHead>)}
              </tr>
            </thead>
            <tbody>
              {Array.from({ length: 26 }, (_, i) => i + 1).map((n) => (
                <SheetRow key={n} $h={rowHeight(n)}>
                  <RowHead scope="row" $active={n === 5}>{n}</RowHead>
                  {columns.map((c) => <SheetCell key={c.id} col={c.id} row={n} />)}
                </SheetRow>
              ))}
            </tbody>
          </Grid>
        </GridClip>
        <VScroll>
          <ScrollButton aria-label="Вверх"><Svg w={5} h={3}><path d="M0 3h5L2.500 0z" fill="#6e6e6e" stroke="none" /></Svg></ScrollButton>
          <VTrack><VThumb /></VTrack>
          <ScrollButton aria-label="Вниз"><Caret /></ScrollButton>
        </VScroll>
      </SheetArea>

      <SheetTabs>
        <TabArrows>
          <button aria-label="Предыдущий лист"><Svg w={4} h={6}><path d="M4 0v6L0 3z" fill="#bbb" stroke="none" /></Svg></button>
          <button aria-label="Следующий лист"><Svg w={4} h={6}><path d="M0 0v6l4-3z" fill="#bbb" stroke="none" /></Svg></button>
        </TabArrows>
        <SheetTab>Лист1</SheetTab>
        <AddSheet aria-label="Новый лист"><Svg><circle cx="7" cy="7" r="6" stroke="#777" /><path d="M7 4v6M4 7h6" stroke="#666" strokeWidth="1.500" /></Svg></AddSheet>
        <HScroll>
          <Dots><Svg w={2} h={10}><path d="M1 0v10" stroke="#aaa" strokeWidth="2" strokeDasharray="2 2" /></Svg></Dots>
          <ScrollButton aria-label="Влево"><Svg w={3} h={5}><path d="M3 0v5L0 2.500z" fill="currentColor" stroke="none" /></Svg></ScrollButton>
          <HTrack><HThumb /></HTrack>
          <ScrollButton aria-label="Вправо"><Svg w={3} h={5}><path d="M0 0v5l3-2.500z" fill="currentColor" stroke="none" /></Svg></ScrollButton>
        </HScroll>
      </SheetTabs>

      <StatusBar>
        <Mode>Готово</Mode>
        <Svg w={12} h={12}><path d="M1.500 4v7.500h10V2.500H5M4 6h7M4 8.500h7M6.500 5v6M9 5v6" stroke="#888" /><circle cx="2.500" cy="2.500" r="2.200" fill="#666" stroke="none" /></Svg>
        <Views>
          <ViewButton $on aria-label="Обычный"><Svg w={11} h={11}><path d="M.5.5h10v10H.5zM.5 4h10M.5 7h10M4 .5v10M7 .5v10" stroke="#777" /></Svg></ViewButton>
          <ViewButton aria-label="Разметка страницы"><Svg w={11} h={11}><path d="M.5.5h10v10H.5zM2.500 2.500h6v6h-6zM4 4.500h3M4 6.500h3" stroke="#777" /></Svg></ViewButton>
          <ViewButton aria-label="Страничный"><Svg w={11} h={11}><path d="M.5.5h10v10H.5zM.5 6h6V.5M3.500.5V4" stroke="#777" /></Svg></ViewButton>
        </Views>
        <Zoom>
          <Svg w={5} h={5}><path d="M0 2.500h5" strokeWidth="1.500" /></Svg>
          <input type="range" aria-label="Масштаб" defaultValue={50} />
          <Svg w={5} h={5}><path d="M0 2.500h5M2.500 0v5" strokeWidth="1.500" /></Svg>
          <span>100%</span>
        </Zoom>
        <Watermark href="http://www.excelworld.ru">www.excelworld.ru</Watermark>
      </StatusBar>
    </Window>
  );
}
